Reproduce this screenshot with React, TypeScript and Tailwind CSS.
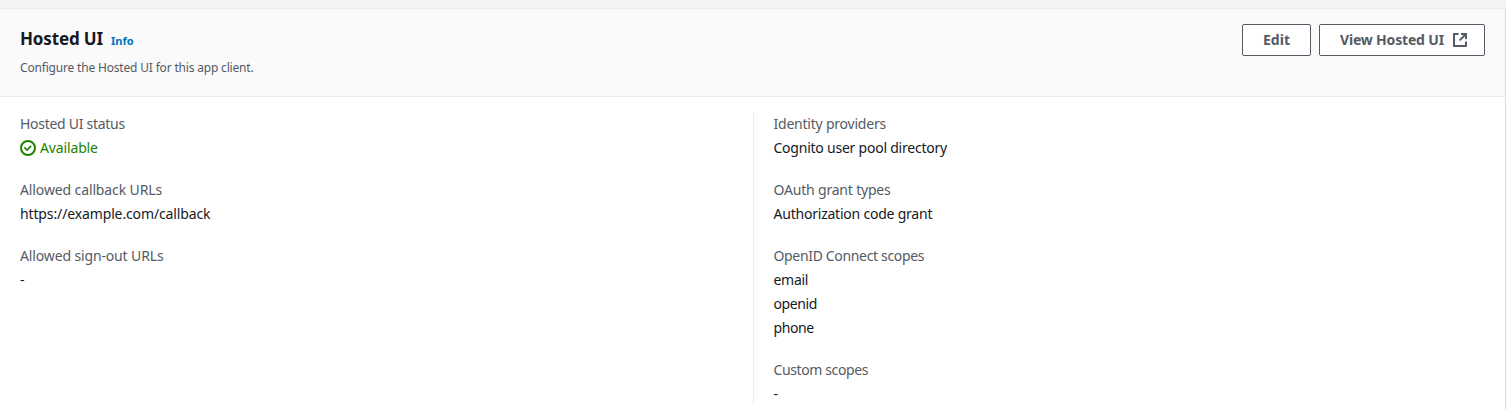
import type { ReactNode } from 'react';

function ExternalIcon() {
  return (
    <svg className="h-4 w-4 shrink-0" viewBox="0 0 16 16" fill="none" stroke="currentColor" strokeWidth="2" aria-hidden="true">
      <path d="M9 2h5v5" />
      <path d="M7.6 8.4L14 2" />
      <path d="M14 9.5V14H2V2h4.5" strokeLinejoin="round" />
    </svg>
  );
}

function PositiveIcon() {
  return (
    <svg className="h-4 w-4 shrink-0" viewBox="0 0 16 16" fill="none" stroke="currentColor" strokeWidth="2" aria-hidden="true">
      <circle cx="8" cy="8" r="7" />
      <path d="M5 8l2 2 3.521-3.521" strokeLinecap="square" strokeWidth="1.7" />
    </svg>
  );
}

function Field({ label, children }: { label: ReactNode; children: ReactNode }) {
  return (
    <div className="whitespace-nowrap first:-mt-px">
      <dt className="h-6 text-[#545b64]">{label}</dt>
      <dd className="text-[#16191f]">{children}</dd>
    </div>
  );
}

export default function App() {
  return (
    <div className="flex h-[409px] w-full flex-col overflow-hidden bg-[#f2f3f3] pt-2 font-['Noto_Sans','Open_Sans',sans-serif] text-[14px] leading-6">
      <section className="flex-1 border-t border-r border-t-[#eaeded] border-r-[#d5dbdb] bg-white">
        <header className="flex h-[88px] items-start justify-between border-b border-[#eaeded] bg-[#fafafa] pt-[15px] pr-5 pl-5">
          <div className="-mt-px">
            <div className="flex h-[30px] items-baseline">
              <h2 className="w-[91px] text-[17px] leading-[31px] font-bold tracking-[-0.15px] text-[#16191f]">Hosted UI</h2>
              <a className="text-[11px] font-bold text-[#0073bb]">Info</a>
            </div>
            <p className="text-[12px] leading-[30px] tracking-[-0.18px] text-[#545b64]">Configure the Hosted UI for this app client.</p>
          </div>
          <div className="flex gap-2 font-bold text-[#545b64]">
            <button className="flex h-8 w-[69px] items-center justify-center rounded-[2px] border border-[#545b64] bg-white">Edit</button>
            <button className="flex h-8 w-[166px] items-center justify-between rounded-[2px] border border-[#545b64] bg-white pr-4 pl-5 whitespace-nowrap">
              <span className="tracking-[-0.18px]">View Hosted UI</span>
              <ExternalIcon />
            </button>
          </div>
        </header>
        <div className="grid grid-cols-2 pt-4">
          <dl className="flex flex-col gap-[18px] pl-5">
            <Field label={<span className="tracking-[-0.28px]">Hosted UI status</span>}>
              <span className="flex items-center gap-1 text-[#1d8102]">
                <PositiveIcon />
                <span className="tracking-[-0.14px]">Available</span>
              </span>
            </Field>
            <Field label={<span className="tracking-[-0.12px]">Allowed callback URLs</span>}>
              <span className="tracking-[-0.13px]">https://example.com/callback</span>
            </Field>
            <Field label={<span className="tracking-[-0.14px]">Allowed sign-out URLs</span>}>-</Field>
          </dl>
          <dl className="flex h-[292px] flex-col gap-[18px] border-l border-[#eaeded] pl-5">
            <Field label={<span className="tracking-[-0.22px]">Identity providers</span>}>
              <span className="tracking-[-0.23px]">Cognito user pool directory</span>
            </Field>
            <Field label={<span className="tracking-[-0.19px]">OAuth grant types</span>}>
              <span className="tracking-[-0.22px]">Authorization code grant</span>
            </Field>
            <Field label={<span className="tracking-[-0.34px]">OpenID Connect scopes</span>}>
              <div className="tracking-[-0.3px]">email</div>
              <div className="tracking-[-0.38px]">openid</div>
              <div className="tracking-[-0.4px]">phone</div>
            </Field>
            <Field label={<span className="tracking-[-0.39px]">Custom scopes</span>}>-</Field>
          </dl>
        </div>
      </section>
    </div>
  );
}
